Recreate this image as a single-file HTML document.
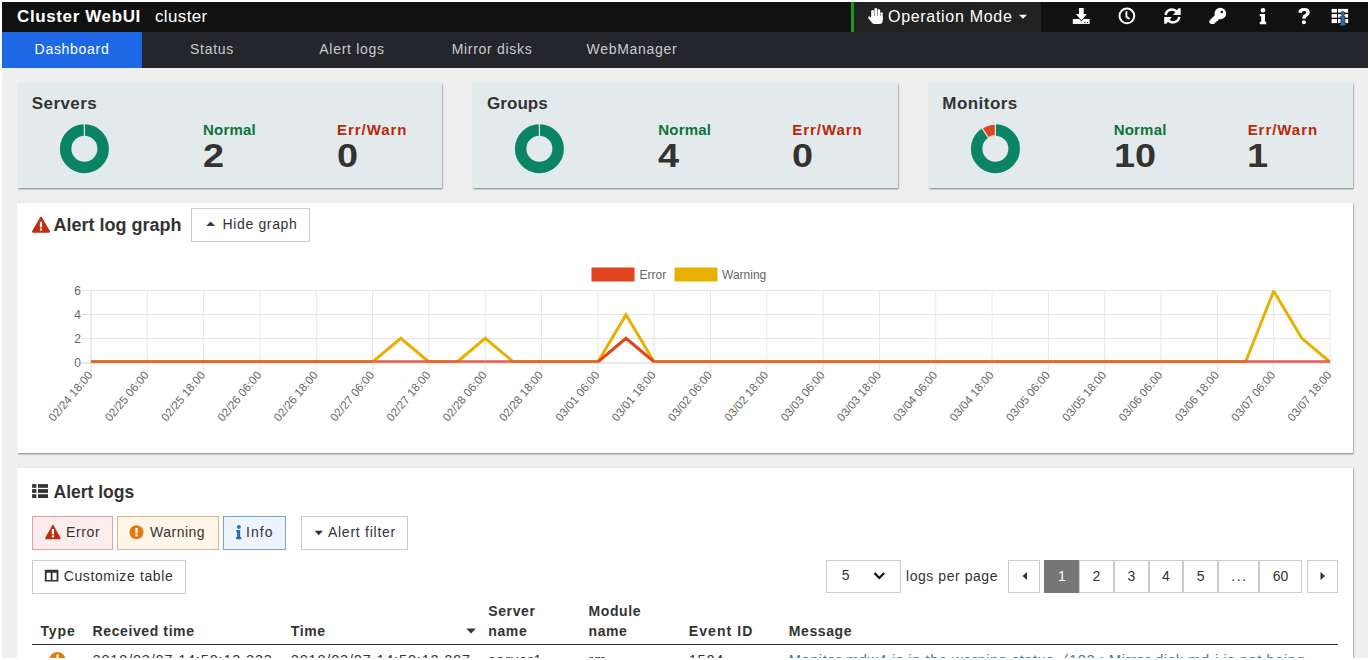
<!DOCTYPE html>
<html><head><meta charset="utf-8">
<style>
html,body{margin:0;padding:0;width:1370px;height:660px;overflow:hidden;background:#fff;}
body{font-family:"Liberation Sans",sans-serif;color:#333;position:relative;}
#clip{position:absolute;left:2px;top:2px;width:1366px;height:656px;overflow:hidden;background:#efefef;}
#pg{position:absolute;left:-2px;top:-2px;width:1370px;height:660px;}
.a{position:absolute;white-space:nowrap;}
#hdr{position:absolute;left:0;top:0;width:1370px;height:31.5px;background:#111;}
#nav{position:absolute;left:0;top:31.5px;width:1370px;height:36px;background:#25262b;}
.tab{position:absolute;top:0;height:36px;width:140px;text-align:center;line-height:35px;font-size:14px;color:#c9cacc;letter-spacing:0.7px;}
.tab.on{background:#1e68e6;color:#fff;}
.stat{position:absolute;top:83px;height:104.6px;width:425.33px;background:#e3eaec;box-shadow:0.5px 1.8px 1.6px rgba(0,0,0,.33),1px 0 1px rgba(0,0,0,.12);}
.stat .t{position:absolute;left:14.7px;top:10.7px;font-size:17px;font-weight:bold;color:#333;letter-spacing:0.45px;}
.stat .lab{position:absolute;top:37.8px;font-size:15px;font-weight:bold;letter-spacing:0.2px;}
.stat .num{position:absolute;top:54px;font-size:33.5px;font-weight:bold;color:#333;transform:scaleX(1.13);transform-origin:0 0;}
.stat svg{position:absolute;left:0;top:0;}
.grn{color:#0f7438;}
.red{color:#b9280a;}
.panel{position:absolute;left:17px;width:1336px;background:#fff;box-shadow:0.5px 1.8px 1.6px rgba(0,0,0,.33),1px 0 1px rgba(0,0,0,.12);}
.btn{position:absolute;height:33.5px;box-sizing:border-box;border:1px solid #ccc;background:#fff;font-size:14px;line-height:31.5px;color:#333;letter-spacing:0.5px;}
.btn span{position:absolute;top:0;}
.th{position:absolute;font-size:14px;font-weight:bold;color:#333;line-height:20px;letter-spacing:0.6px;}
.td{position:absolute;font-size:14.5px;color:#333;letter-spacing:0.82px;top:651.5px;}
.pgb{position:absolute;top:560.1px;height:33.4px;box-sizing:border-box;border:1px solid #ccc;background:#fff;font-size:14px;line-height:30.6px;text-align:center;color:#333;}
</style></head>
<body>
<div id="clip"><div id="pg">

<!-- header -->
<div id="hdr">
  <div class="a" style="left:17px;top:7px;font-size:17px;font-weight:bold;color:#fff;letter-spacing:0.62px;">Cluster WebUI</div>
  <div class="a" style="left:155px;top:7px;font-size:17px;color:#fff;letter-spacing:0.35px;">cluster</div>
  <div class="a" style="left:851px;top:2px;width:3px;height:29.5px;background:#12a012;"></div>
  <div class="a" style="left:854px;top:2px;width:187px;height:29.5px;background:#222;"></div>
  <div class="a" style="left:888px;top:7.5px;font-size:16px;color:#fff;letter-spacing:0.7px;">Operation Mode</div>
  <svg class="a" style="left:0;top:0" width="1370" height="32" viewBox="0 0 1370 32">
    <!-- hand -->
    <g fill="#fff">
      <rect x="871.2" y="10" width="2.8" height="9" rx="1.4"/>
      <rect x="874.4" y="7.9" width="2.8" height="11" rx="1.4"/>
      <rect x="877.6" y="9.2" width="2.6" height="10" rx="1.3"/>
      <rect x="880.5" y="12.2" width="2.2" height="8" rx="1.1"/>
      <path d="M871.2 16 L882.7 16 L882.7 20.5 Q882.7 24 879.5 24 L874.5 24 Q873 24 872 22.8 L868.3 18.2 Q867.6 17 868.8 16.6 Q869.8 16.3 870.6 17.2 L871.5 18.2 Z"/>
    </g>
    <polygon points="1019,14.8 1027,14.8 1023,18.8" fill="#fff"/>
    <!-- download -->
    <g fill="#fff">
      <rect x="1072.8" y="19" width="16.8" height="5"/>
      <rect x="1079.1" y="8" width="4.4" height="7"/>
    </g>
    <polygon points="1074.9,13.9 1087.9,13.9 1081.4,21.4" fill="#111"/>
    <polygon points="1075.9,13.9 1086.9,13.9 1081.4,20.5" fill="#fff"/>
    <rect x="1079.1" y="8" width="4.4" height="6.5" fill="#fff"/>
    <g fill="#111"><rect x="1084.2" y="22.2" width="1.3" height="1"/><rect x="1086.8" y="22.2" width="1.3" height="1"/></g>
    <!-- clock -->
    <circle cx="1126.9" cy="15.9" r="7.35" fill="none" stroke="#fff" stroke-width="2"/>
    <polyline points="1126.4,11.2 1126.4,16.7 1129.6,19.1" fill="none" stroke="#fff" stroke-width="1.9"/>
    <!-- refresh -->
    <g fill="none" stroke="#fff" stroke-width="2.5">
      <path d="M1165.6 15 A6.4 6.4 0 0 1 1176.8 11.8"/>
      <path d="M1179.3 16.9 A6.4 6.4 0 0 1 1168.1 20.1"/>
    </g>
    <g fill="#fff">
      <polygon points="1178.6,8.2 1180.7,8.2 1180.7,15 1173,15"/>
      <polygon points="1166.3,23.7 1164.2,23.7 1164.2,16.9 1171.9,16.9"/>
    </g>
    <!-- key -->
    <g fill="#fff">
      <circle cx="1220.3" cy="13.5" r="5.8"/>
      <polygon points="1215.3,14.8 1219.6,19 1218.2,19.6 1218.2,20.9 1216.4,20.9 1216.4,22.4 1214.6,22.4 1214.6,24.1 1211,24.1 1209.4,22.8 1209.5,20.6"/>
    </g>
    <circle cx="1221.8" cy="12" r="1.25" fill="#111"/>
    <!-- info i -->
    <g fill="#fff">
      <circle cx="1263" cy="10.3" r="2.3"/>
      <path d="M1259.8 14 H1265 V21.8 H1266.2 V24.2 H1259.8 V21.8 H1261.2 V16.3 H1259.8 Z"/>
    </g>
    <!-- question -->
    <g fill="#fff">
      <path d="M1298.4 12.6 Q1298.6 8.1 1303.9 8.1 Q1309.8 8.1 1309.8 12.4 Q1309.8 14.6 1307.6 15.9 Q1305.6 17 1305.6 18.2 V18.8 H1302.3 V17.8 Q1302.3 15.6 1304.3 14.5 Q1306.4 13.4 1306.4 12.4 Q1306.4 11 1304 11 Q1301.8 11 1301.7 13 Z"/>
      <circle cx="1303.9" cy="22.2" r="2"/>
    </g>
    <!-- grid + i -->
    <g fill="#fff">
      <rect x="1331.6" y="8.9" width="5.4" height="3.7"/>
      <rect x="1338" y="8.9" width="10.1" height="3.7"/>
      <rect x="1331.6" y="14.1" width="5.4" height="3.6"/>
      <rect x="1338" y="14.1" width="10.1" height="3.6"/>
      <rect x="1331.6" y="19" width="5.4" height="4.1"/>
      <rect x="1338" y="19" width="10.1" height="4.1"/>
    </g>
    <g fill="#2b6cb3" stroke="#111" stroke-width="0.6">
      <circle cx="1342.9" cy="13.6" r="2.1"/>
      <path d="M1340.2 16.4 H1345 V23.4 H1346 V25.8 H1339.9 V23.4 H1340.9 V18.6 H1340.2 Z"/>
    </g>
  </svg>
</div>

<!-- nav -->
<div id="nav">
  <div class="tab on" style="left:2px;">Dashboard</div>
  <div class="tab" style="left:142px;">Status</div>
  <div class="tab" style="left:282px;">Alert logs</div>
  <div class="tab" style="left:422px;">Mirror disks</div>
  <div class="tab" style="left:562px;">WebManager</div>
</div>

<!-- stat panels -->
<div class="stat" style="left:17px;">
  <svg width="140" height="105" viewBox="0 0 140 105">
    <circle cx="67.4" cy="65.7" r="18.75" fill="none" stroke="#0b8463" stroke-width="11.5"/>
    <line x1="67.4" y1="40.8" x2="67.4" y2="53.2" stroke="#e3eaec" stroke-width="1.2"/>
  </svg>
  <div class="t">Servers</div>
  <div class="lab grn" style="left:186px;">Normal</div>
  <div class="lab red" style="left:320px;letter-spacing:0.95px;">Err/Warn</div>
  <div class="num" style="left:186px;">2</div>
  <div class="num" style="left:319.5px;">0</div>
</div>
<div class="stat" style="left:472.33px;">
  <svg width="140" height="105" viewBox="0 0 140 105">
    <circle cx="67.4" cy="65.7" r="18.75" fill="none" stroke="#0b8463" stroke-width="11.5"/>
    <line x1="67.4" y1="40.8" x2="67.4" y2="53.2" stroke="#e3eaec" stroke-width="1.2"/>
  </svg>
  <div class="t" style="letter-spacing:0.05px;">Groups</div>
  <div class="lab grn" style="left:186px;">Normal</div>
  <div class="lab red" style="left:320px;letter-spacing:0.95px;">Err/Warn</div>
  <div class="num" style="left:186px;">4</div>
  <div class="num" style="left:319.5px;">0</div>
</div>
<div class="stat" style="left:927.67px;">
  <svg width="140" height="105" viewBox="0 0 140 105">
    <circle cx="67.4" cy="65.7" r="18.75" fill="none" stroke="#0b8463" stroke-width="11.5"/>
    <path d="M54.15 45.09 A24.5 24.5 0 0 1 67.40 41.20 L67.40 52.70 A13.0 13.0 0 0 0 60.37 54.76 Z" fill="#e2441f" stroke="#e3eaec" stroke-width="1.2"/>
  </svg>
  <div class="t">Monitors</div>
  <div class="lab grn" style="left:186px;">Normal</div>
  <div class="lab red" style="left:320px;letter-spacing:0.95px;">Err/Warn</div>
  <div class="num" style="left:186px;">10</div>
  <div class="num" style="left:319.5px;">1</div>
</div>

<!-- graph panel -->
<div class="panel" style="top:202.5px;height:250.5px;"></div>
<svg class="a" style="left:0;top:0" width="460" height="260" viewBox="0 0 460 260">
  <path d="M40.3 217 Q41 215.9 41.7 217 L49.9 231 Q50.4 232.8 48.8 232.8 L33.1 232.8 Q31.5 232.8 32.1 231 Z" fill="#c02c0e"/>
  <rect x="39.9" y="221.8" width="2.2" height="5.6" fill="#fff"/>
  <rect x="39.9" y="228.5" width="2.2" height="2.1" fill="#fff"/>
</svg>
<div class="a" style="left:53.5px;top:214.8px;font-size:18px;font-weight:bold;color:#333;">Alert log graph</div>
<div class="btn" style="left:191.2px;top:208.1px;width:118.6px;height:33.6px;">
  <svg class="a" style="left:14px;top:12.3px" width="10" height="6"><polygon points="0.2,5 9,5 4.6,0.6" fill="#333"/></svg>
  <span style="left:30.3px;letter-spacing:0.65px;">Hide graph</span>
</div>
<svg class="a" style="left:0;top:0;" width="1370" height="660" viewBox="0 0 1370 660">
<defs><clipPath id="ca"><rect x="91" y="290.2" width="1239.5" height="72.2"/></clipPath></defs>
<line x1="81" y1="363.0" x2="1330.5" y2="363.0" stroke="#d2d2d2" stroke-width="1"/>
<line x1="81" y1="338.5" x2="1330.5" y2="338.5" stroke="#e6e6e6" stroke-width="1"/>
<line x1="81" y1="314.5" x2="1330.5" y2="314.5" stroke="#e6e6e6" stroke-width="1"/>
<line x1="81" y1="290.5" x2="1330.5" y2="290.5" stroke="#e6e6e6" stroke-width="1"/>
<line x1="91.00" y1="290" x2="91.00" y2="371.5" stroke="#dadada" stroke-width="1"/>
<line x1="147.32" y1="290" x2="147.32" y2="371.5" stroke="#e6e6e6" stroke-width="1"/>
<line x1="203.64" y1="290" x2="203.64" y2="371.5" stroke="#e6e6e6" stroke-width="1"/>
<line x1="259.95" y1="290" x2="259.95" y2="371.5" stroke="#e6e6e6" stroke-width="1"/>
<line x1="316.27" y1="290" x2="316.27" y2="371.5" stroke="#e6e6e6" stroke-width="1"/>
<line x1="372.59" y1="290" x2="372.59" y2="371.5" stroke="#e6e6e6" stroke-width="1"/>
<line x1="428.91" y1="290" x2="428.91" y2="371.5" stroke="#e6e6e6" stroke-width="1"/>
<line x1="485.23" y1="290" x2="485.23" y2="371.5" stroke="#e6e6e6" stroke-width="1"/>
<line x1="541.55" y1="290" x2="541.55" y2="371.5" stroke="#e6e6e6" stroke-width="1"/>
<line x1="597.86" y1="290" x2="597.86" y2="371.5" stroke="#e6e6e6" stroke-width="1"/>
<line x1="654.18" y1="290" x2="654.18" y2="371.5" stroke="#e6e6e6" stroke-width="1"/>
<line x1="710.50" y1="290" x2="710.50" y2="371.5" stroke="#e6e6e6" stroke-width="1"/>
<line x1="766.82" y1="290" x2="766.82" y2="371.5" stroke="#e6e6e6" stroke-width="1"/>
<line x1="823.14" y1="290" x2="823.14" y2="371.5" stroke="#e6e6e6" stroke-width="1"/>
<line x1="879.45" y1="290" x2="879.45" y2="371.5" stroke="#e6e6e6" stroke-width="1"/>
<line x1="935.77" y1="290" x2="935.77" y2="371.5" stroke="#e6e6e6" stroke-width="1"/>
<line x1="992.09" y1="290" x2="992.09" y2="371.5" stroke="#e6e6e6" stroke-width="1"/>
<line x1="1048.41" y1="290" x2="1048.41" y2="371.5" stroke="#e6e6e6" stroke-width="1"/>
<line x1="1104.73" y1="290" x2="1104.73" y2="371.5" stroke="#e6e6e6" stroke-width="1"/>
<line x1="1161.05" y1="290" x2="1161.05" y2="371.5" stroke="#e6e6e6" stroke-width="1"/>
<line x1="1217.36" y1="290" x2="1217.36" y2="371.5" stroke="#e6e6e6" stroke-width="1"/>
<line x1="1273.68" y1="290" x2="1273.68" y2="371.5" stroke="#e6e6e6" stroke-width="1"/>
<line x1="1330.00" y1="290" x2="1330.00" y2="371.5" stroke="#e6e6e6" stroke-width="1"/>
<text x="81" y="366.50" text-anchor="end" font-family="Liberation Sans" font-size="12" fill="#666">0</text>
<text x="81" y="342.50" text-anchor="end" font-family="Liberation Sans" font-size="12" fill="#666">2</text>
<text x="81" y="318.50" text-anchor="end" font-family="Liberation Sans" font-size="12" fill="#666">4</text>
<text x="81" y="294.50" text-anchor="end" font-family="Liberation Sans" font-size="12" fill="#666">6</text>
<text x="93.20" y="375.30" transform="rotate(-50 93.20 375.30)" text-anchor="end" font-family="Liberation Sans" font-size="11.6" fill="#666">02/24 18:00</text>
<text x="149.52" y="375.30" transform="rotate(-50 149.52 375.30)" text-anchor="end" font-family="Liberation Sans" font-size="11.6" fill="#666">02/25 06:00</text>
<text x="205.84" y="375.30" transform="rotate(-50 205.84 375.30)" text-anchor="end" font-family="Liberation Sans" font-size="11.6" fill="#666">02/25 18:00</text>
<text x="262.15" y="375.30" transform="rotate(-50 262.15 375.30)" text-anchor="end" font-family="Liberation Sans" font-size="11.6" fill="#666">02/26 06:00</text>
<text x="318.47" y="375.30" transform="rotate(-50 318.47 375.30)" text-anchor="end" font-family="Liberation Sans" font-size="11.6" fill="#666">02/26 18:00</text>
<text x="374.79" y="375.30" transform="rotate(-50 374.79 375.30)" text-anchor="end" font-family="Liberation Sans" font-size="11.6" fill="#666">02/27 06:00</text>
<text x="431.11" y="375.30" transform="rotate(-50 431.11 375.30)" text-anchor="end" font-family="Liberation Sans" font-size="11.6" fill="#666">02/27 18:00</text>
<text x="487.43" y="375.30" transform="rotate(-50 487.43 375.30)" text-anchor="end" font-family="Liberation Sans" font-size="11.6" fill="#666">02/28 06:00</text>
<text x="543.75" y="375.30" transform="rotate(-50 543.75 375.30)" text-anchor="end" font-family="Liberation Sans" font-size="11.6" fill="#666">02/28 18:00</text>
<text x="600.06" y="375.30" transform="rotate(-50 600.06 375.30)" text-anchor="end" font-family="Liberation Sans" font-size="11.6" fill="#666">03/01 06:00</text>
<text x="656.38" y="375.30" transform="rotate(-50 656.38 375.30)" text-anchor="end" font-family="Liberation Sans" font-size="11.6" fill="#666">03/01 18:00</text>
<text x="712.70" y="375.30" transform="rotate(-50 712.70 375.30)" text-anchor="end" font-family="Liberation Sans" font-size="11.6" fill="#666">03/02 06:00</text>
<text x="769.02" y="375.30" transform="rotate(-50 769.02 375.30)" text-anchor="end" font-family="Liberation Sans" font-size="11.6" fill="#666">03/02 18:00</text>
<text x="825.34" y="375.30" transform="rotate(-50 825.34 375.30)" text-anchor="end" font-family="Liberation Sans" font-size="11.6" fill="#666">03/03 06:00</text>
<text x="881.65" y="375.30" transform="rotate(-50 881.65 375.30)" text-anchor="end" font-family="Liberation Sans" font-size="11.6" fill="#666">03/03 18:00</text>
<text x="937.97" y="375.30" transform="rotate(-50 937.97 375.30)" text-anchor="end" font-family="Liberation Sans" font-size="11.6" fill="#666">03/04 06:00</text>
<text x="994.29" y="375.30" transform="rotate(-50 994.29 375.30)" text-anchor="end" font-family="Liberation Sans" font-size="11.6" fill="#666">03/04 18:00</text>
<text x="1050.61" y="375.30" transform="rotate(-50 1050.61 375.30)" text-anchor="end" font-family="Liberation Sans" font-size="11.6" fill="#666">03/05 06:00</text>
<text x="1106.93" y="375.30" transform="rotate(-50 1106.93 375.30)" text-anchor="end" font-family="Liberation Sans" font-size="11.6" fill="#666">03/05 18:00</text>
<text x="1163.25" y="375.30" transform="rotate(-50 1163.25 375.30)" text-anchor="end" font-family="Liberation Sans" font-size="11.6" fill="#666">03/06 06:00</text>
<text x="1219.56" y="375.30" transform="rotate(-50 1219.56 375.30)" text-anchor="end" font-family="Liberation Sans" font-size="11.6" fill="#666">03/06 18:00</text>
<text x="1275.88" y="375.30" transform="rotate(-50 1275.88 375.30)" text-anchor="end" font-family="Liberation Sans" font-size="11.6" fill="#666">03/07 06:00</text>
<text x="1332.20" y="375.30" transform="rotate(-50 1332.20 375.30)" text-anchor="end" font-family="Liberation Sans" font-size="11.6" fill="#666">03/07 18:00</text>
<g clip-path="url(#ca)">
<polyline points="91.00,362.00 119.16,362.00 147.32,362.00 175.48,362.00 203.64,362.00 231.80,362.00 259.95,362.00 288.11,362.00 316.27,362.00 344.43,362.00 372.59,362.00 400.75,338.33 428.91,362.00 457.07,362.00 485.23,338.33 513.39,362.00 541.55,362.00 569.70,362.00 597.86,362.00 626.02,314.67 654.18,362.00 682.34,362.00 710.50,362.00 738.66,362.00 766.82,362.00 794.98,362.00 823.14,362.00 851.30,362.00 879.45,362.00 907.61,362.00 935.77,362.00 963.93,362.00 992.09,362.00 1020.25,362.00 1048.41,362.00 1076.57,362.00 1104.73,362.00 1132.89,362.00 1161.05,362.00 1189.20,362.00 1217.36,362.00 1245.52,362.00 1273.68,291.00 1301.84,338.33 1330.00,362.00" fill="none" stroke="#e8b100" stroke-width="3"/>
<polyline points="91.00,362.00 119.16,362.00 147.32,362.00 175.48,362.00 203.64,362.00 231.80,362.00 259.95,362.00 288.11,362.00 316.27,362.00 344.43,362.00 372.59,362.00 400.75,362.00 428.91,362.00 457.07,362.00 485.23,362.00 513.39,362.00 541.55,362.00 569.70,362.00 597.86,362.00 626.02,338.33 654.18,362.00 682.34,362.00 710.50,362.00 738.66,362.00 766.82,362.00 794.98,362.00 823.14,362.00 851.30,362.00 879.45,362.00 907.61,362.00 935.77,362.00 963.93,362.00 992.09,362.00 1020.25,362.00 1048.41,362.00 1076.57,362.00 1104.73,362.00 1132.89,362.00 1161.05,362.00 1189.20,362.00 1217.36,362.00 1245.52,362.00 1273.68,362.00 1301.84,362.00 1330.00,362.00" fill="none" stroke="#e2431e" stroke-width="3"/>
<line x1="91.00" y1="362.0" x2="119.16" y2="362.0" stroke="#e3621d" stroke-width="3"/>
<line x1="119.16" y1="362.0" x2="147.32" y2="362.0" stroke="#e3621d" stroke-width="3"/>
<line x1="147.32" y1="362.0" x2="175.48" y2="362.0" stroke="#e3621d" stroke-width="3"/>
<line x1="175.48" y1="362.0" x2="203.64" y2="362.0" stroke="#e3621d" stroke-width="3"/>
<line x1="203.64" y1="362.0" x2="231.80" y2="362.0" stroke="#e3621d" stroke-width="3"/>
<line x1="231.80" y1="362.0" x2="259.95" y2="362.0" stroke="#e3621d" stroke-width="3"/>
<line x1="259.95" y1="362.0" x2="288.11" y2="362.0" stroke="#e3621d" stroke-width="3"/>
<line x1="288.11" y1="362.0" x2="316.27" y2="362.0" stroke="#e3621d" stroke-width="3"/>
<line x1="316.27" y1="362.0" x2="344.43" y2="362.0" stroke="#e3621d" stroke-width="3"/>
<line x1="344.43" y1="362.0" x2="372.59" y2="362.0" stroke="#e3621d" stroke-width="3"/>
<line x1="372.59" y1="362.0" x2="400.75" y2="362.0" stroke="#e66650" stroke-width="3"/>
<line x1="400.75" y1="362.0" x2="428.91" y2="362.0" stroke="#e66650" stroke-width="3"/>
<line x1="428.91" y1="362.0" x2="457.07" y2="362.0" stroke="#e3621d" stroke-width="3"/>
<line x1="457.07" y1="362.0" x2="485.23" y2="362.0" stroke="#e66650" stroke-width="3"/>
<line x1="485.23" y1="362.0" x2="513.39" y2="362.0" stroke="#e66650" stroke-width="3"/>
<line x1="513.39" y1="362.0" x2="541.55" y2="362.0" stroke="#e3621d" stroke-width="3"/>
<line x1="541.55" y1="362.0" x2="569.70" y2="362.0" stroke="#e3621d" stroke-width="3"/>
<line x1="569.70" y1="362.0" x2="597.86" y2="362.0" stroke="#e3621d" stroke-width="3"/>
<line x1="654.18" y1="362.0" x2="682.34" y2="362.0" stroke="#e3621d" stroke-width="3"/>
<line x1="682.34" y1="362.0" x2="710.50" y2="362.0" stroke="#e3621d" stroke-width="3"/>
<line x1="710.50" y1="362.0" x2="738.66" y2="362.0" stroke="#e3621d" stroke-width="3"/>
<line x1="738.66" y1="362.0" x2="766.82" y2="362.0" stroke="#e3621d" stroke-width="3"/>
<line x1="766.82" y1="362.0" x2="794.98" y2="362.0" stroke="#e3621d" stroke-width="3"/>
<line x1="794.98" y1="362.0" x2="823.14" y2="362.0" stroke="#e3621d" stroke-width="3"/>
<line x1="823.14" y1="362.0" x2="851.30" y2="362.0" stroke="#e3621d" stroke-width="3"/>
<line x1="851.30" y1="362.0" x2="879.45" y2="362.0" stroke="#e3621d" stroke-width="3"/>
<line x1="879.45" y1="362.0" x2="907.61" y2="362.0" stroke="#e3621d" stroke-width="3"/>
<line x1="907.61" y1="362.0" x2="935.77" y2="362.0" stroke="#e3621d" stroke-width="3"/>
<line x1="935.77" y1="362.0" x2="963.93" y2="362.0" stroke="#e3621d" stroke-width="3"/>
<line x1="963.93" y1="362.0" x2="992.09" y2="362.0" stroke="#e3621d" stroke-width="3"/>
<line x1="992.09" y1="362.0" x2="1020.25" y2="362.0" stroke="#e3621d" stroke-width="3"/>
<line x1="1020.25" y1="362.0" x2="1048.41" y2="362.0" stroke="#e3621d" stroke-width="3"/>
<line x1="1048.41" y1="362.0" x2="1076.57" y2="362.0" stroke="#e3621d" stroke-width="3"/>
<line x1="1076.57" y1="362.0" x2="1104.73" y2="362.0" stroke="#e3621d" stroke-width="3"/>
<line x1="1104.73" y1="362.0" x2="1132.89" y2="362.0" stroke="#e3621d" stroke-width="3"/>
<line x1="1132.89" y1="362.0" x2="1161.05" y2="362.0" stroke="#e3621d" stroke-width="3"/>
<line x1="1161.05" y1="362.0" x2="1189.20" y2="362.0" stroke="#e3621d" stroke-width="3"/>
<line x1="1189.20" y1="362.0" x2="1217.36" y2="362.0" stroke="#e3621d" stroke-width="3"/>
<line x1="1217.36" y1="362.0" x2="1245.52" y2="362.0" stroke="#e3621d" stroke-width="3"/>
<line x1="1245.52" y1="362.0" x2="1273.68" y2="362.0" stroke="#e66650" stroke-width="3"/>
<line x1="1273.68" y1="362.0" x2="1301.84" y2="362.0" stroke="#e66650" stroke-width="3"/>
<line x1="1301.84" y1="362.0" x2="1330.00" y2="362.0" stroke="#e66650" stroke-width="3"/>
</g>
<rect x="591.5" y="267.5" width="43" height="14" fill="#e2441f"/>
<text x="639.5" y="279" font-family="Liberation Sans" font-size="12" fill="#666">Error</text>
<rect x="674.5" y="267.5" width="43" height="14" fill="#e8b100"/>
<text x="722" y="279" font-family="Liberation Sans" font-size="12" fill="#666">Warning</text>
</svg>

<!-- logs panel -->
<div class="panel" style="top:468px;height:300px;"></div>
<svg class="a" style="left:30px;top:483px" width="20" height="18" viewBox="0 0 20 18">
  <g fill="#333">
    <rect x="2.1" y="1.1" width="4.3" height="3.7"/><rect x="8" y="1.1" width="10" height="3.7"/>
    <rect x="2.1" y="6.1" width="4.3" height="3.8"/><rect x="8" y="6.1" width="10" height="3.8"/>
    <rect x="2.1" y="11.2" width="4.3" height="3.8"/><rect x="8" y="11.2" width="10" height="3.8"/>
  </g>
</svg>
<div class="a" style="left:53.5px;top:481.6px;font-size:17.5px;font-weight:bold;color:#333;">Alert logs</div>

<div class="btn" style="left:32.1px;top:516.2px;width:80.6px;background:#fdecee;border-color:#dba3a6;">
  <svg class="a" style="left:11px;top:7px" width="18" height="16" viewBox="0 0 18 16">
    <path d="M8.3 1.2 Q8.9 0.3 9.5 1.2 L16.5 13.8 Q16.9 15.3 15.5 15.3 L2.3 15.3 Q0.9 15.3 1.3 13.8 Z" fill="#c02c0e"/>
    <rect x="7.8" y="5" width="2.2" height="5.3" fill="#fff"/><rect x="7.8" y="11.4" width="2.2" height="2" fill="#fff"/>
  </svg>
  <span style="left:32.9px;letter-spacing:0.65px;">Error</span>
</div>
<div class="btn" style="left:117.2px;top:516.2px;width:101.5px;background:#fff5e8;border-color:#d9b58c;">
  <svg class="a" style="left:10.2px;top:6.8px" width="16" height="16" viewBox="0 0 16 16">
    <circle cx="8.5" cy="8.3" r="7" fill="#e07b14"/>
    <rect x="7.4" y="4" width="2.2" height="5.3" fill="#fff"/><rect x="7.4" y="10.3" width="2.2" height="2.1" fill="#fff"/>
  </svg>
  <span style="left:31.8px;">Warning</span>
</div>
<div class="btn" style="left:223.3px;top:516.2px;width:62.5px;background:#ecf3fd;border-color:#7aa3d8;">
  <svg class="a" style="left:10px;top:6.6px" width="10" height="18" viewBox="0 0 10 18">
    <circle cx="4.9" cy="2.9" r="2" fill="#2b6cb3"/>
    <path d="M2.3 6.1 H6.2 V12.9 H7.2 V15.2 H2.1 V12.9 H3.1 V8.2 H2.3 Z" fill="#2b6cb3"/>
  </svg>
  <span style="left:21.8px;letter-spacing:1px;">Info</span>
</div>
<div class="btn" style="left:301.3px;top:516.2px;width:106.4px;">
  <svg class="a" style="left:12px;top:13px" width="10" height="6"><polygon points="0.6,0.8 9,0.8 4.8,5.2" fill="#333"/></svg>
  <span style="left:25.6px;letter-spacing:0.75px;">Alert filter</span>
</div>
<div class="btn" style="left:32.1px;top:560.1px;width:153.5px;">
  <svg class="a" style="left:11.2px;top:8.4px" width="16" height="14" viewBox="0 0 16 14">
    <path d="M0.8 0.8 H14.4 V12.6 H0.8 Z M2.6 3.7 V10.9 H6.7 V3.7 Z M8.5 3.7 V10.9 H12.6 V3.7 Z" fill="#333" fill-rule="evenodd"/>
  </svg>
  <span style="left:30.6px;letter-spacing:0.62px;">Customize table</span>
</div>

<!-- per page select -->
<div class="btn" style="left:826.1px;top:560.1px;width:74.6px;height:33.3px;">
  <span style="left:14.7px;top:-0.8px;">5</span>
  <svg class="a" style="left:45.6px;top:9.7px" width="13" height="10" viewBox="0 0 13 10"><polyline points="1.5,2 6.3,7 11.2,2" fill="none" stroke="#111" stroke-width="2.2"/></svg>
</div>
<div class="a" style="left:906px;top:568.3px;font-size:14px;color:#333;letter-spacing:0.55px;">logs per page</div>

<div class="pgb" style="left:1008.2px;width:31.5px;"><svg class="a" style="left:11.5px;top:10px" width="8" height="10"><polygon points="6,1 6,9 1.5,5" fill="#333"/></svg></div>
<div class="pgb" style="left:1044.2px;width:35.3px;background:#777;border-color:#777;color:#fff;">1</div>
<div class="pgb" style="left:1079px;width:35px;">2</div>
<div class="pgb" style="left:1113.6px;width:35.4px;">3</div>
<div class="pgb" style="left:1148.6px;width:34.8px;">4</div>
<div class="pgb" style="left:1183px;width:35.4px;">5</div>
<div class="pgb" style="left:1218px;width:41.3px;letter-spacing:1.6px;text-indent:1.6px;">...</div>
<div class="pgb" style="left:1258.9px;width:43.1px;">60</div>
<div class="pgb" style="left:1307px;width:30.8px;"><svg class="a" style="left:11px;top:10px" width="8" height="10"><polygon points="1.5,1 1.5,9 6,5" fill="#333"/></svg></div>

<!-- table header -->
<div class="th" style="left:40.4px;top:620.8px;letter-spacing:0.9px;">Type</div>
<div class="th" style="left:92.6px;top:620.8px;">Received time</div>
<div class="th" style="left:290.8px;top:620.8px;">Time</div>
<svg class="a" style="left:466px;top:628px" width="11" height="7"><polygon points="0.4,0.6 9.8,0.6 5.1,5.5" fill="#333"/></svg>
<div class="th" style="left:488.3px;top:600.8px;">Server<br>name</div>
<div class="th" style="left:588.5px;top:600.8px;">Module<br>name</div>
<div class="th" style="left:688.7px;top:620.8px;letter-spacing:1.1px;">Event ID</div>
<div class="th" style="left:788.8px;top:620.8px;">Message</div>
<div class="a" style="left:32.2px;top:643.6px;width:1306px;height:1.8px;background:#333;"></div>

<!-- first row (clipped) -->
<svg class="a" style="left:49px;top:651px" width="18" height="18"><circle cx="8.5" cy="9" r="8" fill="#e07b14"/><rect x="7.4" y="3.5" width="2.2" height="5" fill="#fff"/></svg>
<div class="td" style="left:92.6px;">2018/03/07 14:50:13.333</div>
<div class="td" style="left:290.8px;">2018/03/07 14:50:12.297</div>
<div class="td" style="left:488.3px;">server1</div>
<div class="td" style="left:588.5px;">rm</div>
<div class="td" style="left:688.7px;">1504</div>
<div class="td" style="left:788.8px;color:#337ab7;letter-spacing:0.62px;">Monitor mdw4 is in the warning status. (102 : Mirror disk md-i is not being</div>

</div></div>
</body></html>
